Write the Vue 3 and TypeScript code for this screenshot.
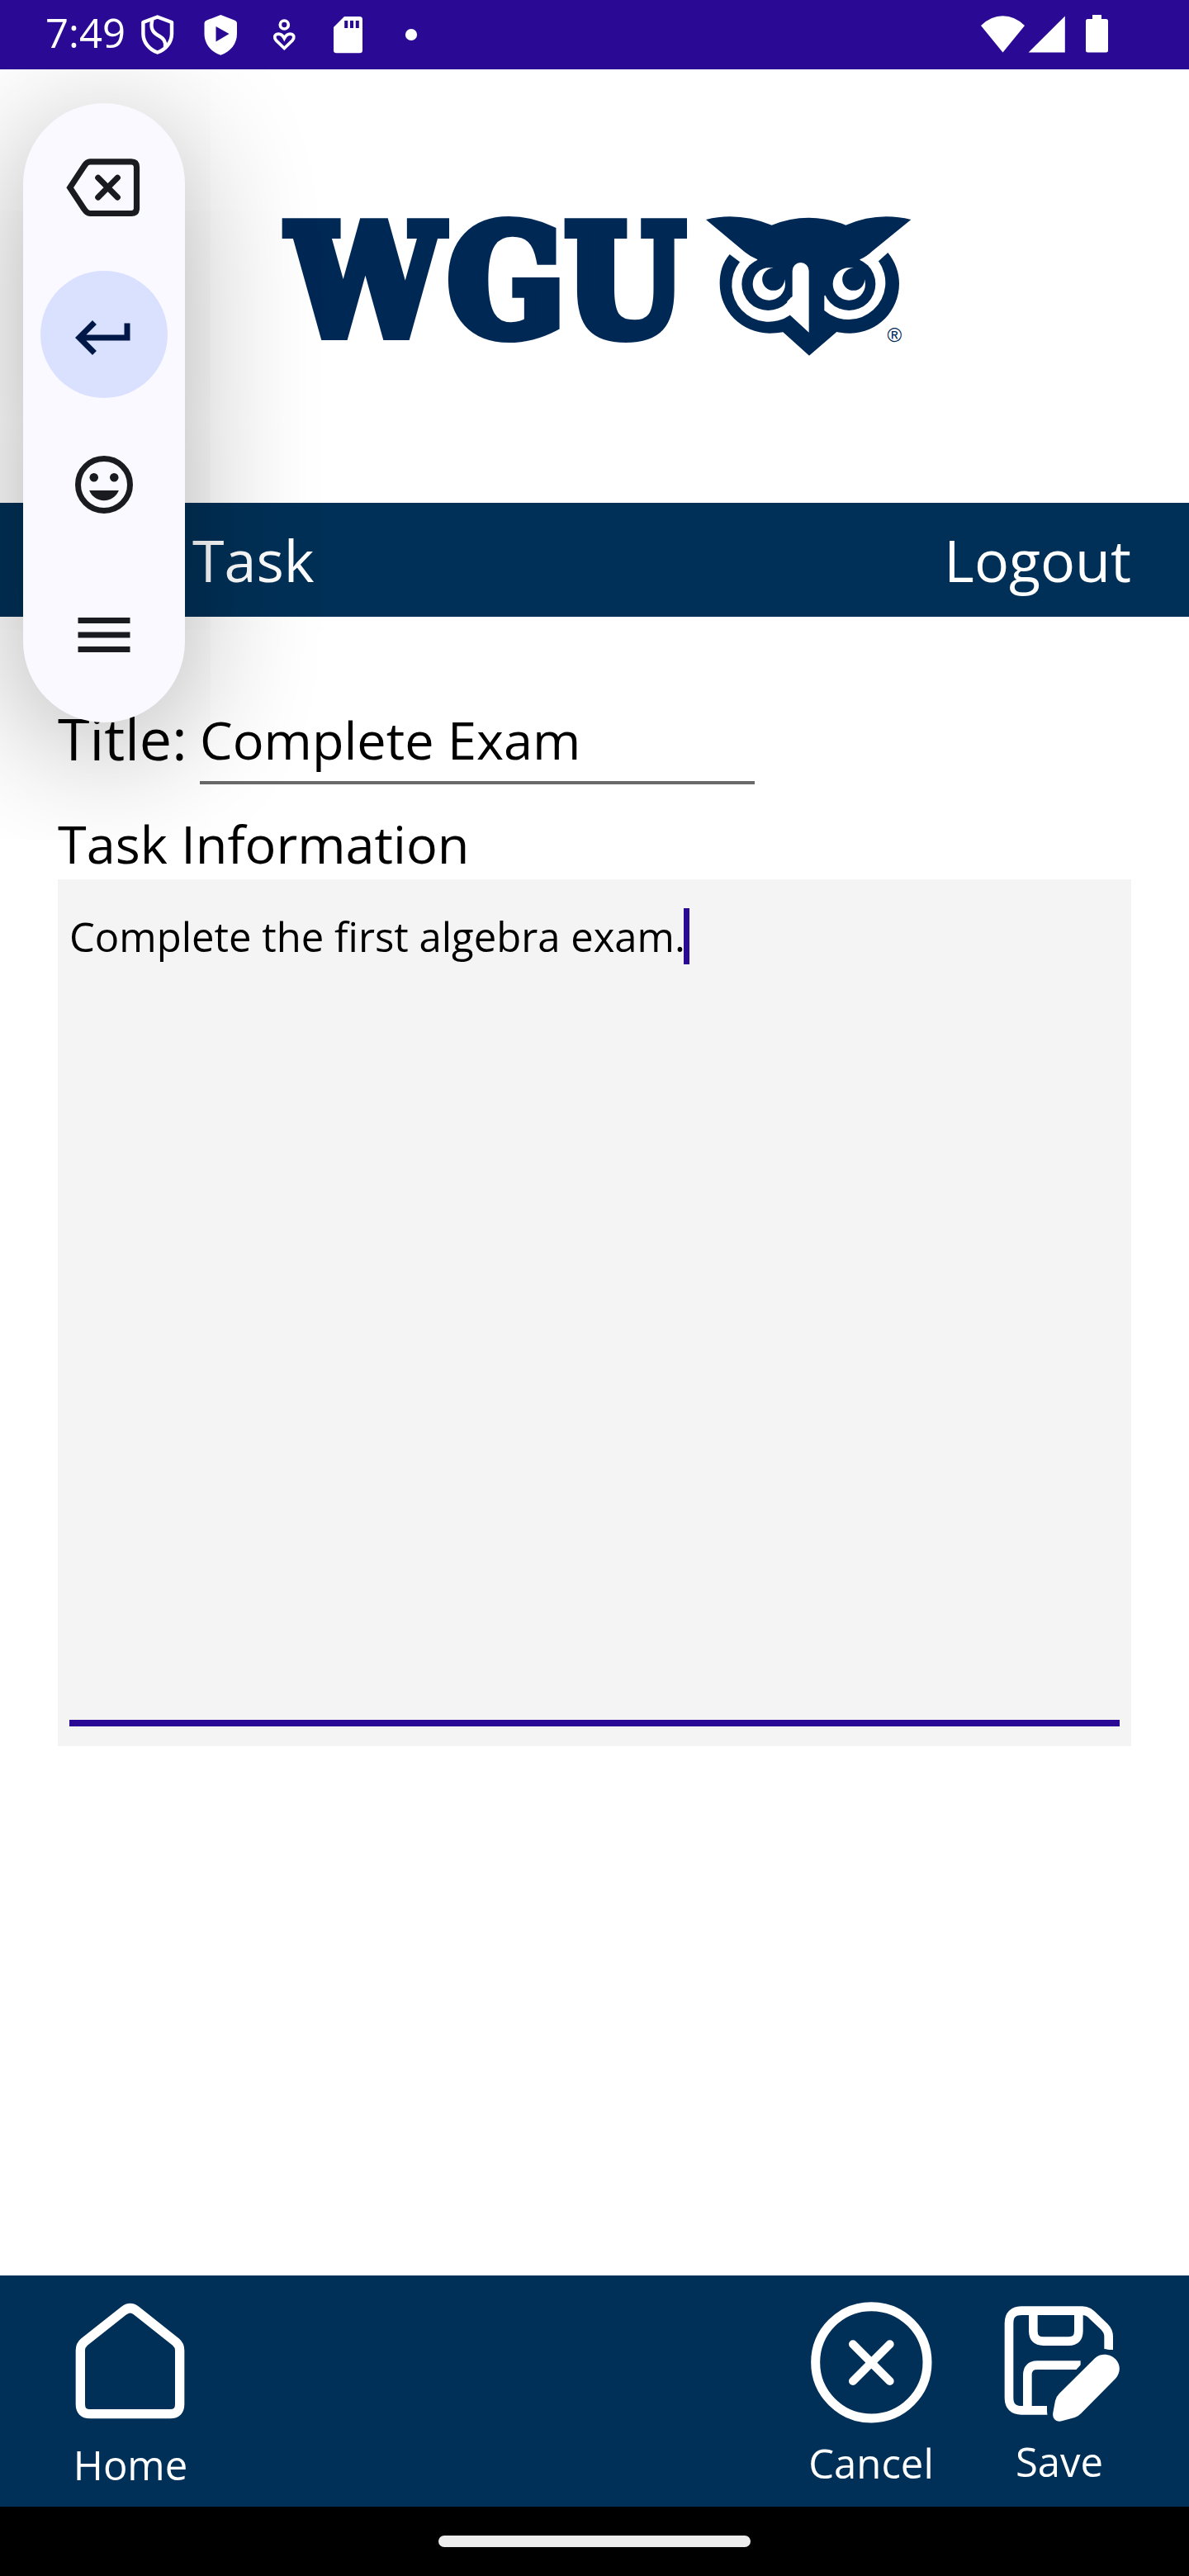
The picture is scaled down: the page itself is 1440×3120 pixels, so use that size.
<script setup lang="ts">
import { ref } from 'vue'

const time = ref('7:49')
const title = ref('Complete Exam')
const details = ref('Complete the first algebra exam.')
</script>

<template>
  <div class="screen">
    <header class="status">
      <span class="time">{{ time }}</span>
      <div class="notifications">
        <svg viewBox="152 0 77 84" fill="none" stroke="#fff" stroke-width="4.4">
          <path d="M190.7 20.5 L208 27 V41 C208 51 201 60 190.7 63.5 C180.500 60 173.400 51 173.400 41 V27 Z" stroke-linejoin="round" />
          <path d="M184.500 24 C182 33 184 38 190 42 C198 46 201 50 200 57" />
        </svg>
        <svg viewBox="229 0 77 84" fill="#fff">
          <path d="M267.300 18 L284 24.500 Q287 25.500 287 28.500 V41 C287 53 279 63 267.300 66.700 C255.500 63 247.500 53 247.500 41 V28.500 Q247.500 25.500 250.500 24.500 Z" />
          <path d="M261.500 32 V50.500 L277.500 41 Z" fill="#2a0a94" />
        </svg>
        <svg viewBox="306 0 77 84" fill="none" stroke="#fff" stroke-width="3.700">
          <circle cx="344.300" cy="30" r="5" />
          <path d="M344.300 58.500 L334.500 49 C331.500 45.500 332.500 42 336 41.300 C340 40.700 342.500 43 344.300 46.500 C346.100 43 348.600 40.700 352.600 41.300 C356.100 42 357.100 45.500 354.100 49 Z" />
        </svg>
        <svg viewBox="383 0 77 84" fill="#fff">
          <path d="M417 20 H435.500 Q439 20 439 23.500 V61 Q439 64.300 435.500 64.300 H407.500 Q404 64.300 404 61 V33 Z" />
          <path d="M417.200 25h4v9h-4z M424 25h4v9h-4z M430.800 25h4v9h-4z" fill="#2a0a94" />
        </svg>
        <svg viewBox="460 0 77 84" fill="#fff"><circle cx="498" cy="42" r="7.100" /></svg>
      </div>
      <svg class="system" viewBox="1180 0 170 84" fill="#fff">
        <path d="M1188 31 Q1200 19.300 1214.500 19.300 Q1229 19.300 1241 31 L1214.500 63.500 Z" />
        <path d="M1289.800 19.500 V63.500 H1245.600 Z" />
        <path d="M1323 18 H1334 V23 H1339.500 Q1342 23 1342 25.500 V61 Q1342 63.500 1339.500 63.500 H1317.500 Q1315 63.500 1315 61 V25.500 Q1315 23 1317.500 23 H1323 Z" />
      </svg>
    </header>

    <div class="app">
      <div class="brand">
        <svg viewBox="320 200 800 270" fill="#002855">
          <text class="wordmark" x="350 543 685" y="405">WGU</text>
          <g transform="translate(840 240) scale(.33333)">
            <path d="M131 204 C105 235 95 270 95 310 C95 410 175 491 276 491 Q302 491 325 487 L420 572 L520 486 Q545 491 570 491 C668 491 747 410 747 310 C747 270 733 232 706 198 L672 229 L168 232 Z" />
            <path fill="#fff" d="M168 232 A134 134 0 0 0 350 425 L354 360 L271 312 L235 223 Z" />
            <path fill="#fff" d="M672 229 A134 134 0 0 1 475 408 V355 L565 312 L604 223 Z" />
            <path d="M45 78 Q160 48 284 98 Q350 71 418 71 Q490 71 553 98 Q670 48 790 78 L650 192 Q628 213 604 223 V240 H232 V223 Q205 212 186 196 Z" />
            <circle cx="271" cy="312" r="96" />
            <circle cx="565" cy="312" r="96" />
            <path fill="#fff" d="M359 264 A30 30 0 0 1 419 264 V488 L349 424 L340 375 L359 357 Z" />
            <circle cx="274" cy="312" r="59" fill="#fff" />
            <circle cx="290" cy="295" r="40.500" />
            <circle cx="565" cy="312" r="59" fill="#fff" />
            <circle cx="581" cy="295" r="40.500" />
            <text class="registered" x="730" y="522" text-anchor="middle">®</text>
          </g>
        </svg>
      </div>

      <nav class="bar">
        <span class="bar-title">Task</span>
        <span>Logout</span>
      </nav>

      <main class="form">
        <div class="title-row">
          <span class="title-label">Title:</span>
          <div class="title-field">{{ title }}</div>
        </div>
        <div class="info-label">Task Information</div>
        <div class="info-field">
          <div class="info-text"><span>{{ details }}</span><i class="caret"></i></div>
        </div>
      </main>

      <footer class="actions">
        <div class="action home">
          <svg viewBox="114 108 480 480" fill="none" stroke="#fff" stroke-width="34">
            <path d="M330 176 Q353 158 376 176 L519 290 Q533 302 533 320 V516 Q533 551 498 551 H207 Q172 551 172 516 V320 Q172 302 186 290 Z" />
          </svg>
          <span>Home</span>
        </div>
        <div class="action cancel">
          <svg viewBox="105 108 480 480" fill="none" stroke="#fff" stroke-width="33">
            <circle cx="346" cy="364" r="203" />
            <path d="M279 298 L413 432 M413 298 L279 432" stroke-width="30" stroke-linecap="round" />
          </svg>
          <span>Cancel</span>
        </div>
        <div class="action save">
          <svg viewBox="789 108 480 480" fill="none" stroke="#fff" stroke-width="32">
            <path d="M986 538 H892 Q846 538 846 492 V222 Q846 176 892 176 H1112 Q1132 176 1146 190 L1192 234 Q1208 250 1208 270 V318" />
            <path d="M934 180 V250 Q934 287 971 287 H1063 Q1099 287 1099 250 V180" />
            <path d="M913 530 V410 Q913 374 949 374 H1106" />
            <path d="M1088 392 L1122 356 V396 Z M984 520 H991 L984 560 Z M1190 314 L1226 321 H1190 Z" fill="#003057" stroke="none" />
            <path d="M1158 349 C1180 327 1215 333 1233 352 C1252 372 1253 402 1232 424 L1108 549 Q1098 560 1085 564 L1038 577 C1018 582 1002 569 1006 546 L1014 503 Q1018 488 1028 478 Z" fill="#fff" stroke="none" />
          </svg>
          <span>Save</span>
        </div>
      </footer>

      <aside class="keys">
        <div class="key">
          <svg class="lowered wide" viewBox="76 185 100 84" fill="none" stroke="#1a1b20" stroke-width="7.200">
            <path d="M84.700 227.200 L102 201 Q105.200 195.900 109 195.900 H159 Q165.500 195.900 165.500 202.400 V252 Q165.500 258.500 159 258.500 H109 Q105.200 258.500 102 253.400 Z" />
            <path d="M118.800 215.300 L142.300 239 M142.300 215.300 L118.800 239" stroke-linecap="round" />
          </svg>
        </div>
        <div class="key active">
          <svg class="lowered" viewBox="0 0 24 24" fill="#001847"><path d="M19 7v4H5.830l3.580-3.590L8 6l-6 6 6 6 1.410-1.410L5.830 13H21V7z" /></svg>
        </div>
        <div class="key">
          <svg viewBox="0 0 24 24" fill="#1a1b20">
            <circle cx="12" cy="12" r="9" fill="none" stroke="#1a1b20" stroke-width="2" />
            <circle cx="8.500" cy="9.500" r="1.500" />
            <circle cx="15.500" cy="9.500" r="1.500" />
            <path d="M12 17.500c2.330 0 4.310-1.460 5.110-3.500H6.890c.8 2.040 2.780 3.500 5.110 3.500z" />
          </svg>
        </div>
        <div class="key">
          <svg viewBox="0 0 24 24" fill="#1a1b20"><path d="M3 18h18v-2H3v2zm0-5h18v-2H3v2zm0-7v2h18V6H3z" /></svg>
        </div>
      </aside>
    </div>

    <div class="gesture"><i></i></div>
  </div>
</template>

<style>
body { margin: 0; background: #fff; }
</style>

<style scoped>
.screen {
  width: 1440px;
  height: 3120px;
  display: flex;
  flex-direction: column;
  overflow: hidden;
  background: #fff;
  color: #000;
  font-family: "Open Sans", "Noto Sans", sans-serif;
}
svg { display: block; flex: none; }

.status {
  height: 84px;
  flex: none;
  display: flex;
  align-items: center;
  background: #2a0a94;
  color: #fff;
}
.time {
  width: 97px;
  padding-left: 55px;
  font-size: 49px;
  line-height: 78px;
  height: 84px;
  white-space: nowrap;
}
.notifications { display: flex; }
.notifications svg { width: 77px; height: 84px; }
.system { width: 170px; height: 84px; margin: 0 90px 0 auto; }

.app {
  position: relative;
  flex: 1;
  display: flex;
  flex-direction: column;
  overflow: hidden;
}
.brand { height: 525px; flex: none; display: flex; padding: 0 320px; box-sizing: border-box; }
.brand svg { width: 800px; height: 270px; margin-top: 116px; }
.wordmark {
  font-family: "DejaVu Serif Condensed", "DejaVu Serif", serif;
  font-weight: 700;
  font-stretch: condensed;
  font-size: 183px;
  stroke: #002855;
  stroke-width: 14px;
}
.registered { font-family: "Liberation Sans", sans-serif; font-size: 72px; }

.bar {
  height: 138px;
  flex: none;
  display: flex;
  justify-content: space-between;
  padding: 0 70px 0 233px;
  background: #003057;
  color: #fff;
  font-size: 70px;
  line-height: 138px;
}

.form { flex: 1; padding: 100px 70px 0; }
.title-row { display: flex; height: 132px; }
.title-label { width: 172px; font-size: 70px; line-height: 95px; }
.title-field {
  width: 672px;
  height: 93px;
  margin-top: 6px;
  border-bottom: 4px solid #6a6a6a;
  font-size: 63px;
  line-height: 86px;
}
.info-label { height: 86px; font-size: 63px; line-height: 86px; }
.info-field {
  height: 1050px;
  box-sizing: border-box;
  padding: 35px 14px 24px;
  background: #f4f4f4;
}
.info-text {
  height: 983px;
  display: flex;
  align-items: flex-start;
  border-bottom: 8px solid #2a0a94;
  font-size: 49px;
  line-height: 68px;
}
.caret { width: 7px; height: 68px; margin-left: -2px; background: #2a0a94; }

.actions {
  height: 280px;
  flex: none;
  display: flex;
  box-sizing: border-box;
  padding: 20px 77px 0 78px;
  background: #003057;
  color: #fff;
}
.action {
  width: 160px;
  display: flex;
  flex-direction: column;
  align-items: center;
  font-size: 49px;
  line-height: 67px;
}
.action svg { width: 160px; height: 160px; }
.home span { margin-top: 16px; }
.cancel { margin-left: auto; }
.cancel span { margin-top: 14px; }
.save { margin-left: 68px; }
.save span { margin-top: 12px; }

/* Floating keyboard toolbar */
.keys {
  position: absolute;
  left: 28px;
  top: 41px;
  width: 196px;
  height: 750px;
  box-sizing: border-box;
  padding-top: 21px;
  display: flex;
  flex-direction: column;
  align-items: center;
  gap: 28px;
  border-radius: 98px;
  background: #f9f9ff;
  box-shadow: 0 28px 160px rgba(0, 0, 0, 0.32);
}
.key {
  width: 154px;
  height: 154px;
  flex: none;
  display: flex;
  align-items: center;
  justify-content: center;
  border-radius: 50%;
}
.key svg { width: 84px; height: 84px; }
.key svg.wide { width: 100px; }
.key svg.lowered { margin-top: 8px; }
.active { background: #dae1ff; }

.gesture {
  height: 84px;
  flex: none;
  display: flex;
  align-items: center;
  justify-content: center;
  background: #000;
}
.gesture i { width: 378px; height: 14px; border-radius: 7px; background: #ececec; }
</style>
